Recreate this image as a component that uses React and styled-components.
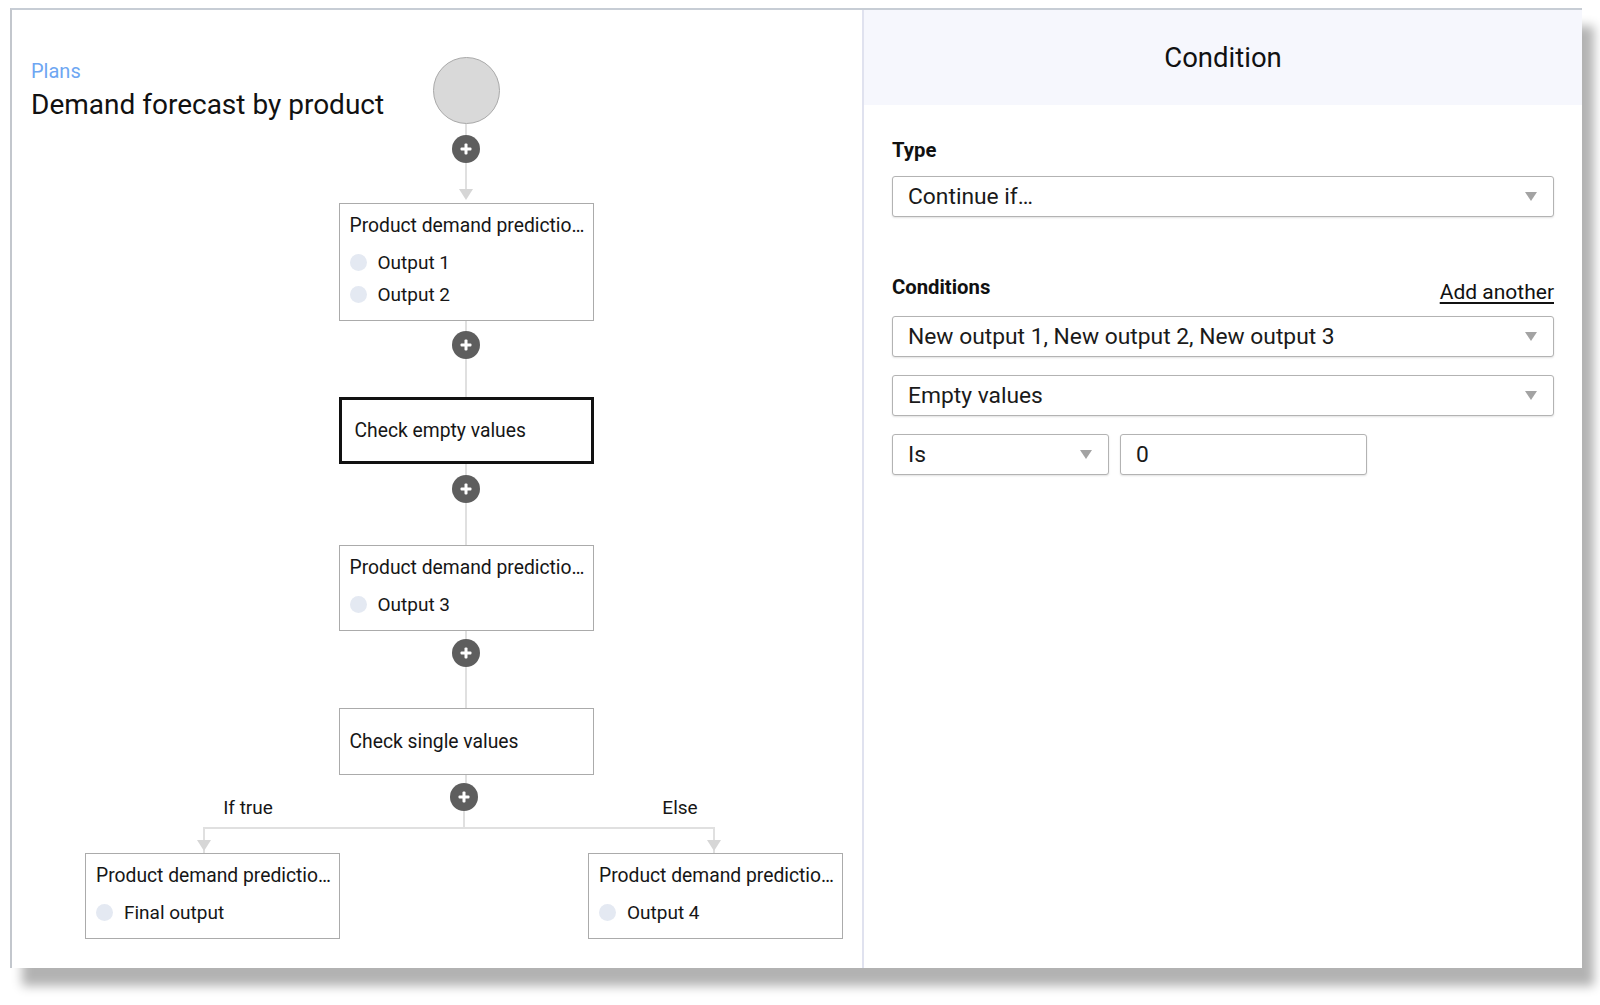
import React from 'react';
import styled, { createGlobalStyle } from 'styled-components';

const GlobalStyle = createGlobalStyle`
  html, body {
    margin: 0;
    padding: 0;
    background: #ffffff;
  }
  body {
    font-family: Roboto, 'Noto Sans', 'Liberation Sans', sans-serif;
    color: #1c1c1c;
  }
`;

const Page = styled.div`
  width: 1600px;
  height: 1005px;
  box-sizing: border-box;
  padding: 8px 0 0 10px;
`;

// Outer app window with the grey drop shadow
const Window = styled.div`
  width: 1572px;
  height: 960px;
  box-sizing: border-box;
  display: flex;
  background: #ffffff;
  border-top: 2px solid #c7cdd5;
  border-left: 2px solid #c3c7cd;
  box-shadow: 12px 18px 10px rgba(0, 0, 0, 0.3);
`;

/* ---------- left: plan canvas ---------- */

const Canvas = styled.div`
  position: relative;
  width: 852px;
  flex-shrink: 0;
  box-sizing: border-box;
  border-right: 2px solid #e0e2ef;
  padding: 47px 0 0 58px;
  display: flex;
  flex-direction: column;
  align-items: center;
`;

const PlanTitle = styled.div`
  position: absolute;
  left: 19px;
  top: 49px;
`;

const Crumb = styled.div`
  font-size: 20px;
  line-height: 24px;
  color: #6ea6f2;
`;

const Heading = styled.h1`
  margin: 5px 0 0;
  font-size: 28px;
  line-height: 34px;
  font-weight: 400;
  color: #111111;
`;

const StartCircle = styled.div`
  width: 67px;
  height: 67px;
  box-sizing: border-box;
  border-radius: 50%;
  background: #d9d9d9;
  border: 1.5px solid #a9a9a9;
`;

const Connector = styled.div`
  height: ${({ h }) => h}px;
  display: flex;
  flex-direction: column;
  align-items: center;

  &::before {
    content: '';
    flex: 1;
    width: 2px;
    background: #e0e0e0;
  }

  ${({ arrow }) =>
    arrow &&
    `
    &::after {
      content: '';
      width: 0;
      height: 0;
      border-left: 7px solid transparent;
      border-right: 7px solid transparent;
      border-top: 11px solid #d6d6d6;
      margin-bottom: 3px;
    }
  `}
`;

const PlusButton = styled.div`
  position: relative;
  width: 28px;
  height: 28px;
  border-radius: 50%;
  background: #5e5e5e;
  flex-shrink: 0;

  &::before,
  &::after {
    content: '';
    position: absolute;
    left: 50%;
    top: 50%;
    background: #ffffff;
    border-radius: 1px;
    transform: translate(-50%, -50%);
  }
  &::before {
    width: 11px;
    height: 3px;
  }
  &::after {
    width: 3px;
    height: 11px;
  }
`;

const Node = styled.div`
  width: 255px;
  box-sizing: border-box;
  background: #ffffff;
  border: ${({ selected }) => (selected ? '3px solid #111111' : '1px solid #ababab')};
  padding: ${({ check, selected }) =>
    check ? (selected ? '0 10px 0 13px' : '0 10px') : '10px 10px 10px 10px'};
  height: ${({ check }) => (check ? '67px' : 'auto')};
  display: flex;
  flex-direction: column;
  justify-content: ${({ check }) => (check ? 'center' : 'flex-start')};
`;

const NodeTitle = styled.div`
  font-size: 19.3px;
  line-height: 24px;
  color: #161616;
  white-space: nowrap;
`;

const OutputList = styled.div`
  margin-top: 8px;
  display: flex;
  flex-direction: column;
`;

const OutputRow = styled.div`
  height: 32px;
  display: flex;
  align-items: center;
  gap: 11px;
  font-size: 19px;
  color: #161616;
`;

const Dot = styled.span`
  width: 17px;
  height: 17px;
  border-radius: 50%;
  background: #e4e9f2;
  flex-shrink: 0;
`;

const Branch = styled.div`
  width: 758px;
  margin-left: -4px;
  display: flex;
  flex-direction: column;
`;

const BranchHead = styled.div`
  display: grid;
  grid-template-columns: 1fr 28px 1fr;
  height: 44px;
`;

const BranchLabel = styled.div`
  align-self: end;
  margin-bottom: 8px;
  font-size: 19px;
  line-height: 22px;
  text-align: center;
  color: #161616;
  padding: ${({ side }) => (side === 'left' ? '0 39px 0 0' : '0 0 0 39px')};
`;

const PlusStack = styled.div`
  display: flex;
  flex-direction: column;
  align-items: center;
`;

const Fork = styled.div`
  position: relative;
  height: 26px;
  margin: 0 128px 0 118px;
  box-sizing: border-box;
  border-top: 2px solid #e0e0e0;
  border-left: 2px solid #e0e0e0;
  border-right: 2px solid #e0e0e0;

  &::before,
  &::after {
    content: '';
    position: absolute;
    bottom: 2px;
    width: 0;
    height: 0;
    border-left: 7px solid transparent;
    border-right: 7px solid transparent;
    border-top: 11px solid #d6d6d6;
  }
  &::before {
    left: -8px;
  }
  &::after {
    right: -8px;
  }
`;

const BranchNodes = styled.div`
  display: flex;
  justify-content: space-between;
`;

/* ---------- right: condition panel ---------- */

const Panel = styled.div`
  flex: 1;
  display: flex;
  flex-direction: column;
`;

const PanelHeader = styled.div`
  height: 95px;
  background: #f6f7fd;
  display: flex;
  align-items: center;
  justify-content: center;
  font-size: 27.5px;
  color: #111111;
`;

const PanelBody = styled.div`
  padding: 34px 28px 0 28px;
  display: flex;
  flex-direction: column;
`;

const FieldLabel = styled.div`
  font-size: 20.3px;
  line-height: 22px;
  font-weight: 700;
  color: #111111;
`;

const LabelRow = styled.div`
  margin-top: 59px;
  display: flex;
  justify-content: space-between;
  align-items: flex-start;
`;

const AddLink = styled.a`
  margin-top: 4px;
  font-size: 21px;
  line-height: 24px;
  color: #111111;
  text-decoration: underline;
  text-underline-offset: 3px;
`;

const Select = styled.div`
  height: 41px;
  width: ${({ w }) => (w ? `${w}px` : 'auto')};
  margin-top: ${({ mt }) => mt || 0}px;
  box-sizing: border-box;
  border: 1px solid #b3b3b3;
  border-radius: 3px;
  box-shadow: 0 1px 2px rgba(0, 0, 0, 0.12);
  padding: 0 16px 0 15px;
  display: flex;
  align-items: center;
  justify-content: space-between;
  font-size: 22.8px;
  color: #1a1a1a;
  background: #ffffff;
`;

const Caret = styled.span`
  width: 0;
  height: 0;
  border-left: 6px solid transparent;
  border-right: 6px solid transparent;
  border-top: 9px solid #a3a3a3;
`;

const InlineRow = styled.div`
  margin-top: 18px;
  display: flex;
  gap: 11px;
`;

const Output = ({ label }) => (
  <OutputRow>
    <Dot />
    {label}
  </OutputRow>
);

const MODEL = 'Product demand predictio…';

function App() {
  return (
    <Page>
      <GlobalStyle />
      <Window>
        <Canvas>
          <PlanTitle>
            <Crumb>Plans</Crumb>
            <Heading>Demand forecast by product</Heading>
          </PlanTitle>

          <StartCircle />
          <Connector h={11} />
          <PlusButton />
          <Connector h={40} arrow />
          <Node>
            <NodeTitle>{MODEL}</NodeTitle>
            <OutputList>
              <Output label="Output 1" />
              <Output label="Output 2" />
            </OutputList>
          </Node>

          <Connector h={10} />
          <PlusButton />
          <Connector h={38} />
          <Node check selected>
            <NodeTitle>Check empty values</NodeTitle>
          </Node>

          <Connector h={11} />
          <PlusButton />
          <Connector h={42} />
          <Node>
            <NodeTitle>{MODEL}</NodeTitle>
            <OutputList>
              <Output label="Output 3" />
            </OutputList>
          </Node>

          <Connector h={8} />
          <PlusButton />
          <Connector h={41} />
          <Node check>
            <NodeTitle>Check single values</NodeTitle>
          </Node>

          <Connector h={8} />
          <Branch>
            <BranchHead>
              <BranchLabel side="left">If true</BranchLabel>
              <PlusStack>
                <PlusButton />
                <Connector h={16} />
              </PlusStack>
              <BranchLabel side="right">Else</BranchLabel>
            </BranchHead>
            <Fork />
            <BranchNodes>
              <Node>
                <NodeTitle>{MODEL}</NodeTitle>
                <OutputList>
                  <Output label="Final output" />
                </OutputList>
              </Node>
              <Node>
                <NodeTitle>{MODEL}</NodeTitle>
                <OutputList>
                  <Output label="Output 4" />
                </OutputList>
              </Node>
            </BranchNodes>
          </Branch>
        </Canvas>

        <Panel>
          <PanelHeader>Condition</PanelHeader>
          <PanelBody>
            <FieldLabel>Type</FieldLabel>
            <Select mt={15}>
              Continue if…
              <Caret />
            </Select>

            <LabelRow>
              <FieldLabel>Conditions</FieldLabel>
              <AddLink>Add another</AddLink>
            </LabelRow>
            <Select mt={12}>
              New output 1, New output 2, New output 3
              <Caret />
            </Select>
            <Select mt={18}>
              Empty values
              <Caret />
            </Select>
            <InlineRow>
              <Select w={217}>
                Is
                <Caret />
              </Select>
              <Select w={247}>0</Select>
            </InlineRow>
          </PanelBody>
        </Panel>
      </Window>
    </Page>
  );
}

export default App;
